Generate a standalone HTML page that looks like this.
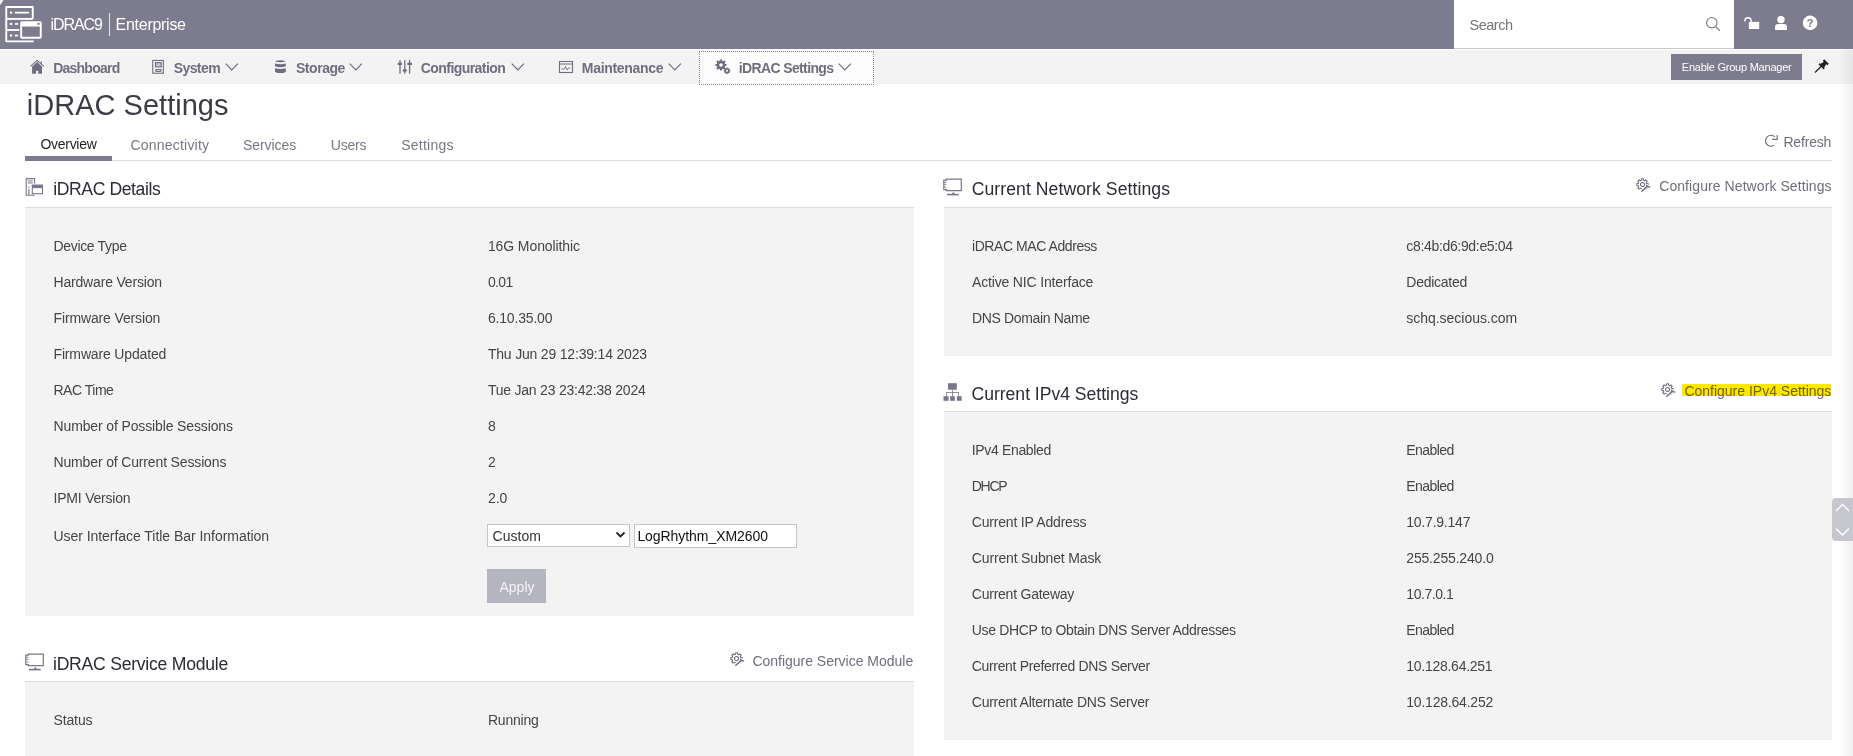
<!DOCTYPE html>
<html><head><meta charset="utf-8">
<style>
*{box-sizing:border-box;margin:0;padding:0}
html,body{width:1853px;height:756px;overflow:hidden;background:#fff;font-family:"Liberation Sans",sans-serif;position:relative}
.a{position:absolute;white-space:nowrap}
svg.a{overflow:visible}
</style></head><body>
<div class="a" style="left:0px;top:0px;width:1853px;height:49px;background:#7d7c8f;"></div>
<svg class="a" style="left:0px;top:0px;" width="6" height="6" viewBox="0 0 6 6"><path d="M0 0 H3.6 L0 5.2 Z" fill="#f4f4f8"/></svg>
<div class="a" style="left:0px;top:50px;width:1853px;height:34px;background:#f3f3f3;"></div>
<svg class="a" style="left:0px;top:0px;" width="50" height="48" viewBox="0 0 50 48"><g fill="none" stroke="#fff" stroke-width="1.9" stroke-linejoin="round">
<path d="M6.25 18.9 V6.95 H32.75 V18.9"/>
<path d="M6.25 18.9 H32.75"/>
<path d="M6.25 18.9 V41.35 H33.7"/>
<path d="M6.25 30 H19.2"/>
<rect x="21.15" y="22.15" width="19.6" height="15.6" rx="0.8"/>
</g>
<g fill="#fff"><rect x="9.9" y="11.6" width="2.3" height="2"/><rect x="14.9" y="11.8" width="14.2" height="1.7"/>
<rect x="9.9" y="22.9" width="2.3" height="2"/><rect x="14.9" y="23.1" width="3.2" height="1.7"/>
<rect x="9.9" y="34.5" width="2.3" height="2"/><rect x="14.9" y="34.7" width="3.2" height="1.7"/>
<rect x="21.15" y="22.15" width="19.6" height="4.4"/></g>
<rect x="37.4" y="22.8" width="2.2" height="2" fill="#7d7c8f"/></svg>
<div class="a" style="left:50.40px;top:15px;font-size:16px;line-height:20px;color:#fff;letter-spacing:-1.040px;">iDRAC9</div>
<div class="a" style="left:109px;top:13px;width:1px;height:23px;background:#e8e8ee;"></div>
<div class="a" style="left:115.60px;top:15px;font-size:16px;line-height:20px;color:#fff;letter-spacing:-0.278px;">Enterprise</div>
<div class="a" style="left:1454px;top:0px;width:280px;height:49px;background:#fff;border-bottom:1px solid #c9c9c9;"></div>
<div class="a" style="left:1469.60px;top:16px;font-size:14.5px;line-height:18px;color:#757575;letter-spacing:-0.510px;">Search</div>
<svg class="a" style="left:1704px;top:15px;" width="18" height="18" viewBox="0 0 18 18"><circle cx="7.8" cy="7.7" r="5.2" fill="none" stroke="#7a7a7a" stroke-width="1.1"/><path d="M11.6 11.6 L16 15.8" stroke="#7a7a7a" stroke-width="1.2"/></svg>
<svg class="a" style="left:1742px;top:14px;" width="20" height="18" viewBox="0 0 20 18"><path d="M2.9 7.4 V6.8 A3.1 3.1 0 0 1 9.1 6.8 V8" fill="none" stroke="#fff" stroke-width="1.35"/><rect x="6.85" y="7.9" width="10.35" height="7.1" fill="#fff"/></svg>
<svg class="a" style="left:1772px;top:13px;" width="18" height="19" viewBox="0 0 18 19"><circle cx="9" cy="6.6" r="3.65" fill="#fff"/><path d="M3 17 V14.2 Q3 10.9 6.3 10.9 H11.7 Q15 10.9 15 14.2 V17 Z" fill="#fff"/></svg>
<svg class="a" style="left:1801px;top:14px;" width="18" height="18" viewBox="0 0 18 18"><circle cx="9.1" cy="8.9" r="7.3" fill="#fff"/><text x="9.1" y="12.9" font-size="11.5" font-weight="bold" font-family="Liberation Sans" text-anchor="middle" fill="#7d7c8f">?</text></svg>
<svg class="a" style="left:26px;top:56px;" width="22" height="22" viewBox="0 0 22 22"><path d="M4.4 10.3 L11.1 4.4 L17.8 10.3" fill="none" stroke="#6f6e80" stroke-width="1.1"/><path d="M6.1 10.4 L11.1 6.1 L16 10.4 V17.75 H12.2 V14.8 H10 V17.75 H6.1 Z" fill="#6f6e80"/><rect x="14.7" y="5.1" width="1.1" height="2.8" fill="#6f6e80"/></svg>
<div class="a" style="left:53.20px;top:59px;font-size:14px;line-height:18px;color:#6f6e80;font-weight:bold;letter-spacing:-0.762px;">Dashboard</div>
<svg class="a" style="left:148px;top:56px;" width="22" height="22" viewBox="0 0 22 22"><rect x="4.75" y="4.45" width="10.6" height="12.8" fill="none" stroke="#6f6e80" stroke-width="1.1"/><rect x="7.5" y="6.6" width="5.7" height="4.3" fill="#c4c3cc" stroke="#6f6e80" stroke-width="1.1"/><rect x="7.5" y="13.6" width="5.7" height="1.9" rx="0.9" fill="none" stroke="#6f6e80" stroke-width="1.1"/></svg>
<div class="a" style="left:173.70px;top:59px;font-size:14px;line-height:18px;color:#6f6e80;font-weight:bold;letter-spacing:-0.580px;">System</div>
<svg class="a" style="left:224.8px;top:63px;" width="14" height="8" viewBox="0 0 14 8"><path d="M0.7 0.7 L6.8 6.8 L12.9 0.7" fill="none" stroke="#6f6e80" stroke-width="1.2"/></svg>
<svg class="a" style="left:270px;top:56px;" width="22" height="22" viewBox="0 0 22 22"><g fill="#6f6e80"><path d="M4.9 5.2 Q10.4 3.3 15.9 5.2 Q10.4 7.1 4.9 5.2 Z"/><path d="M5 7.6 Q10.4 9 15.8 7.6 V10.3 Q10.4 12.2 5 10.3 Z"/><path d="M5 12.3 Q10.4 13.7 15.8 12.3 V15.9 Q10.4 18.3 5 15.9 Z"/></g></svg>
<div class="a" style="left:296.00px;top:59px;font-size:14px;line-height:18px;color:#6f6e80;font-weight:bold;letter-spacing:-0.467px;">Storage</div>
<svg class="a" style="left:349.2px;top:63px;" width="14" height="8" viewBox="0 0 14 8"><path d="M0.7 0.7 L6.8 6.8 L12.9 0.7" fill="none" stroke="#6f6e80" stroke-width="1.2"/></svg>
<svg class="a" style="left:393px;top:56px;" width="24" height="22" viewBox="0 0 24 22"><g fill="#6f6e80"><rect x="6.35" y="4.1" width="1.3" height="13.6"/><rect x="11.15" y="4.1" width="1.3" height="13.6"/><rect x="15.95" y="4.1" width="1.3" height="13.6"/><rect x="4.8" y="6.7" width="4.2" height="2.3"/><rect x="9.9" y="13.3" width="3.8" height="2.3"/><rect x="14.3" y="6.7" width="4.6" height="2.3"/></g></svg>
<div class="a" style="left:420.80px;top:59px;font-size:14px;line-height:18px;color:#6f6e80;font-weight:bold;letter-spacing:-0.562px;">Configuration</div>
<svg class="a" style="left:510.6px;top:63px;" width="14" height="8" viewBox="0 0 14 8"><path d="M0.7 0.7 L6.8 6.8 L12.9 0.7" fill="none" stroke="#6f6e80" stroke-width="1.2"/></svg>
<svg class="a" style="left:558px;top:60px;" width="16" height="14" viewBox="0 0 16 14"><rect x="1.5" y="1.5" width="13" height="11" fill="none" stroke="#6f6e80" stroke-width="1.1"/><path d="M1.5 4 H14.5" stroke="#6f6e80" stroke-width="1"/><path d="M3.5 9 H6 L7.5 6.5 L9 10 L10.5 8 H12.5" fill="none" stroke="#6f6e80" stroke-width="0.9"/></svg>
<div class="a" style="left:581.80px;top:59px;font-size:14px;line-height:18px;color:#6f6e80;font-weight:bold;letter-spacing:-0.300px;">Maintenance</div>
<svg class="a" style="left:667.6px;top:63px;" width="14" height="8" viewBox="0 0 14 8"><path d="M0.7 0.7 L6.8 6.8 L12.9 0.7" fill="none" stroke="#6f6e80" stroke-width="1.2"/></svg>
<div class="a" style="left:699px;top:51px;width:175px;height:34px;background:#fdfdfd;border:1px dotted #8a8a8a;"></div>
<svg class="a" style="left:713px;top:57px;" width="20" height="20" viewBox="0 0 20 20"><g fill="#6f6e80"><circle cx="8" cy="8" r="4.3"/><g stroke="#6f6e80" stroke-width="2.2"><path d="M8 2.4V13.6M2.4 8H13.6M4 4L12 12M12 4L4 12"/></g><circle cx="14" cy="13.8" r="2.6"/><g stroke="#6f6e80" stroke-width="1.4"><path d="M14 10.6V17M10.8 13.8H17.2M11.7 11.5L16.3 16.1M16.3 11.5L11.7 16.1"/></g></g><circle cx="8" cy="8" r="1.8" fill="#fdfdfd"/><circle cx="14" cy="13.8" r="1" fill="#fdfdfd"/></svg>
<div class="a" style="left:738.70px;top:59px;font-size:14px;line-height:18px;color:#6f6e80;font-weight:bold;letter-spacing:-0.619px;">iDRAC Settings</div>
<svg class="a" style="left:838.2px;top:63px;" width="14" height="8" viewBox="0 0 14 8"><path d="M0.7 0.7 L6.8 6.8 L12.9 0.7" fill="none" stroke="#6f6e80" stroke-width="1.2"/></svg>
<div class="a" style="left:1671px;top:54px;width:131px;height:26px;background:#7d7c8f;"></div>
<div class="a" style="left:1681.80px;top:60px;font-size:11px;line-height:14px;color:#fff;letter-spacing:-0.234px;">Enable Group Manager</div>
<svg class="a" style="left:1813px;top:57px;" width="18" height="18" viewBox="0 0 18 18"><path d="M2 15.5 L9 8.5" stroke="#222" stroke-width="1.3"/><path d="M7 7 L11.5 4.5 L13.5 6.5 L11 11 Z" fill="#222"/><path d="M10.5 3 L15 7.5" stroke="#222" stroke-width="2.2"/><path d="M6 6.8 L11.2 12" stroke="#222" stroke-width="1.6"/></svg>
<div class="a" style="left:26.80px;top:87px;font-size:29px;line-height:36px;color:#3c3c46;letter-spacing:0.019px;">iDRAC Settings</div>
<div class="a" style="left:40.50px;top:135px;font-size:14px;line-height:18px;color:#1e1e24;letter-spacing:-0.300px;">Overview</div>
<div class="a" style="left:130.50px;top:136px;font-size:14px;line-height:18px;color:#787788;letter-spacing:0.205px;">Connectivity</div>
<div class="a" style="left:243.00px;top:136px;font-size:14px;line-height:18px;color:#787788;letter-spacing:-0.057px;">Services</div>
<div class="a" style="left:330.80px;top:136px;font-size:14px;line-height:18px;color:#787788;letter-spacing:-0.212px;">Users</div>
<div class="a" style="left:401.20px;top:136px;font-size:14px;line-height:18px;color:#787788;letter-spacing:0.243px;">Settings</div>
<div class="a" style="left:25px;top:160px;width:1807px;height:1px;background:#dcdce0;"></div>
<div class="a" style="left:25px;top:156px;width:87px;height:5px;background:#7d7c8f;"></div>
<svg class="a" style="left:1760px;top:130px;" width="24" height="22" viewBox="0 0 24 22"><path d="M14.94 6.87 A5.5 5.5 0 1 0 14.2 15.27" fill="none" stroke="#6f6e80" stroke-width="1.15"/><path d="M12.2 9.3 H17.2 V4.9" fill="none" stroke="#6f6e80" stroke-width="1.15"/></svg>
<div class="a" style="left:1783.40px;top:133px;font-size:14px;line-height:18px;color:#6f6e80;letter-spacing:-0.167px;">Refresh</div>
<svg class="a" style="left:25px;top:178px;" width="18" height="18" viewBox="0 0 18 18"><g fill="none" stroke="#77768a" stroke-width="1.1"><path d="M9.6 5.5 V0.6 H1.2 V17.3 H9.6"/></g><rect x="2.8" y="2.4" width="5" height="1" fill="#77768a"/><rect x="2.8" y="4.4" width="5" height="1" fill="#77768a"/><rect x="3.3" y="11" width="1.2" height="6" fill="#77768a"/><rect x="3.3" y="8.6" width="1.2" height="1.2" fill="#77768a"/><rect x="7.3" y="7.1" width="10.2" height="8.6" fill="none" stroke="#77768a" stroke-width="1.1"/><rect x="7.3" y="7.1" width="10.2" height="3" fill="#77768a"/></svg>
<div class="a" style="left:53.20px;top:178px;font-size:17.6px;line-height:22px;color:#2c2c36;letter-spacing:-0.404px;">iDRAC Details</div>
<div class="a" style="left:25px;top:207px;width:889px;height:409px;background:#f3f3f3;border-top:1px solid #dcdcdf;"></div>
<div class="a" style="left:53.50px;top:237px;font-size:14px;line-height:18px;color:#454545;letter-spacing:-0.330px;">Device Type</div>
<div class="a" style="left:487.90px;top:237px;font-size:14px;line-height:18px;color:#454545;letter-spacing:-0.092px;">16G Monolithic</div>
<div class="a" style="left:53.50px;top:273px;font-size:14px;line-height:18px;color:#454545;letter-spacing:-0.180px;">Hardware Version</div>
<div class="a" style="left:487.90px;top:273px;font-size:14px;line-height:18px;color:#454545;letter-spacing:-0.617px;">0.01</div>
<div class="a" style="left:53.50px;top:309px;font-size:14px;line-height:18px;color:#454545;letter-spacing:-0.140px;">Firmware Version</div>
<div class="a" style="left:487.90px;top:309px;font-size:14px;line-height:18px;color:#454545;letter-spacing:-0.172px;">6.10.35.00</div>
<div class="a" style="left:53.50px;top:345px;font-size:14px;line-height:18px;color:#454545;letter-spacing:-0.150px;">Firmware Updated</div>
<div class="a" style="left:487.90px;top:345px;font-size:14px;line-height:18px;color:#454545;letter-spacing:-0.189px;">Thu Jun 29 12:39:14 2023</div>
<div class="a" style="left:53.50px;top:381px;font-size:14px;line-height:18px;color:#454545;letter-spacing:-0.486px;">RAC Time</div>
<div class="a" style="left:487.90px;top:381px;font-size:14px;line-height:18px;color:#454545;letter-spacing:-0.220px;">Tue Jan 23 23:42:38 2024</div>
<div class="a" style="left:53.50px;top:417px;font-size:14px;line-height:18px;color:#454545;letter-spacing:-0.129px;">Number of Possible Sessions</div>
<div class="a" style="left:487.90px;top:417px;font-size:14px;line-height:18px;color:#454545;">8</div>
<div class="a" style="left:53.50px;top:453px;font-size:14px;line-height:18px;color:#454545;letter-spacing:-0.150px;">Number of Current Sessions</div>
<div class="a" style="left:487.90px;top:453px;font-size:14px;line-height:18px;color:#454545;">2</div>
<div class="a" style="left:53.50px;top:489px;font-size:14px;line-height:18px;color:#454545;letter-spacing:-0.205px;">IPMI Version</div>
<div class="a" style="left:487.90px;top:489px;font-size:14px;line-height:18px;color:#454545;">2.0</div>
<div class="a" style="left:53.40px;top:527px;font-size:14px;line-height:18px;color:#454545;letter-spacing:-0.040px;">User Interface Title Bar Information</div>
<div class="a" style="left:487px;top:524px;width:143px;height:23px;background:#fff;border:1px solid #c6c6c6;"></div>
<div class="a" style="left:492.60px;top:527px;font-size:14px;line-height:18px;color:#333;">Custom</div>
<svg class="a" style="left:615px;top:530px;" width="12" height="10" viewBox="0 0 12 10"><path d="M1.5 2.5 L5.5 6.5 L9.5 2.5" fill="none" stroke="#222" stroke-width="1.8"/></svg>
<div class="a" style="left:634px;top:524px;width:163px;height:24px;background:#fff;border:1px solid #c6c6c6;"></div>
<div class="a" style="left:637.40px;top:527px;font-size:14px;line-height:18px;color:#111;letter-spacing:-0.060px;">LogRhythm_XM2600</div>
<div class="a" style="left:487px;top:569px;width:59px;height:34px;background:#b5b4c1;"></div>
<div class="a" style="left:499.50px;top:578px;font-size:14px;line-height:18px;color:#f4f4f7;">Apply</div>
<svg class="a" style="left:21.8px;top:650.2px;" width="24" height="24" viewBox="0 0 24 24"><path d="M6.35 4.1 H21.3 V15.55 H6.35 V14.6 H3.8 V5.2 H6.35 Z" fill="none" stroke="#77768a" stroke-width="1.2"/><g stroke="#77768a" stroke-width="0.9"><path d="M4.2 7.3 H6.4"/><path d="M4.2 9.4 H6.4"/><path d="M4.2 12.1 H6.4"/></g><path d="M7 19.6 H18.7" stroke="#77768a" stroke-width="1.6"/><path d="M13.3 17.1 L11.3 19.6 H15.3 Z" fill="#77768a"/></svg>
<div class="a" style="left:53.00px;top:653px;font-size:17.6px;line-height:22px;color:#2c2c36;letter-spacing:-0.245px;">iDRAC Service Module</div>
<svg class="a" style="left:726px;top:648px;" width="24" height="22" viewBox="0 0 24 22"><path d="M9.39 6.30 L9.56 4.83 L11.44 4.83 L11.61 6.30 L12.68 6.74 L13.84 5.82 L15.18 7.16 L14.26 8.32 L14.70 9.39 L16.17 9.56 L16.17 11.44 L14.70 11.61 L14.26 12.68 L15.18 13.84 L13.84 15.18 L12.68 14.26 L11.61 14.70 L11.44 16.17 L9.56 16.17 L9.39 14.70 L8.32 14.26 L7.16 15.18 L5.82 13.84 L6.74 12.68 L6.30 11.61 L4.83 11.44 L4.83 9.56 L6.30 9.39 L6.74 8.32 L5.82 7.16 L7.16 5.82 L8.32 6.74 Z" fill="none" stroke="#6f6e80" stroke-width="1.05" stroke-linejoin="round"/><circle cx="10.5" cy="10.5" r="2.1" fill="none" stroke="#6f6e80" stroke-width="1.05"/><path d="M9.6 17.2 L15.2 12.2" stroke="#fff" stroke-width="3.4"/><path d="M14.2 11.4 L17.6 13.4" stroke="#fff" stroke-width="3"/><path d="M9.8 17.3 L15 12.6" stroke="#6f6e80" stroke-width="1.5" stroke-linecap="round"/><path d="M14.6 11.3 Q15.6 12.9 17.6 12.9" fill="none" stroke="#6f6e80" stroke-width="1.5" stroke-linecap="round"/></svg>
<div class="a" style="left:752.40px;top:652px;font-size:14px;line-height:18px;color:#6f6e80;letter-spacing:-0.013px;">Configure Service Module</div>
<div class="a" style="left:25px;top:681px;width:889px;height:80px;background:#f3f3f3;border-top:1px solid #dcdcdf;"></div>
<div class="a" style="left:53.40px;top:711px;font-size:14px;line-height:18px;color:#454545;letter-spacing:-0.100px;">Status</div>
<div class="a" style="left:487.90px;top:711px;font-size:14px;line-height:18px;color:#454545;letter-spacing:-0.192px;">Running</div>
<svg class="a" style="left:940px;top:175px;" width="24" height="24" viewBox="0 0 24 24"><path d="M6.35 4.1 H21.3 V15.55 H6.35 V14.6 H3.8 V5.2 H6.35 Z" fill="none" stroke="#77768a" stroke-width="1.2"/><g stroke="#77768a" stroke-width="0.9"><path d="M4.2 7.3 H6.4"/><path d="M4.2 9.4 H6.4"/><path d="M4.2 12.1 H6.4"/></g><path d="M7 19.6 H18.7" stroke="#77768a" stroke-width="1.6"/><path d="M13.3 17.1 L11.3 19.6 H15.3 Z" fill="#77768a"/></svg>
<div class="a" style="left:971.70px;top:178px;font-size:17.6px;line-height:22px;color:#2c2c36;letter-spacing:0.074px;">Current Network Settings</div>
<svg class="a" style="left:1632px;top:174px;" width="24" height="22" viewBox="0 0 24 22"><path d="M9.39 6.30 L9.56 4.83 L11.44 4.83 L11.61 6.30 L12.68 6.74 L13.84 5.82 L15.18 7.16 L14.26 8.32 L14.70 9.39 L16.17 9.56 L16.17 11.44 L14.70 11.61 L14.26 12.68 L15.18 13.84 L13.84 15.18 L12.68 14.26 L11.61 14.70 L11.44 16.17 L9.56 16.17 L9.39 14.70 L8.32 14.26 L7.16 15.18 L5.82 13.84 L6.74 12.68 L6.30 11.61 L4.83 11.44 L4.83 9.56 L6.30 9.39 L6.74 8.32 L5.82 7.16 L7.16 5.82 L8.32 6.74 Z" fill="none" stroke="#6f6e80" stroke-width="1.05" stroke-linejoin="round"/><circle cx="10.5" cy="10.5" r="2.1" fill="none" stroke="#6f6e80" stroke-width="1.05"/><path d="M9.6 17.2 L15.2 12.2" stroke="#fff" stroke-width="3.4"/><path d="M14.2 11.4 L17.6 13.4" stroke="#fff" stroke-width="3"/><path d="M9.8 17.3 L15 12.6" stroke="#6f6e80" stroke-width="1.5" stroke-linecap="round"/><path d="M14.6 11.3 Q15.6 12.9 17.6 12.9" fill="none" stroke="#6f6e80" stroke-width="1.5" stroke-linecap="round"/></svg>
<div class="a" style="left:1659.20px;top:177px;font-size:14px;line-height:18px;color:#6f6e80;letter-spacing:0.080px;">Configure Network Settings</div>
<div class="a" style="left:944px;top:207px;width:888px;height:149px;background:#f3f3f3;border-top:1px solid #dcdcdf;"></div>
<div class="a" style="left:972.00px;top:237px;font-size:14px;line-height:18px;color:#454545;letter-spacing:-0.434px;">iDRAC MAC Address</div>
<div class="a" style="left:1406.30px;top:237px;font-size:14px;line-height:18px;color:#454545;letter-spacing:-0.331px;">c8:4b:d6:9d:e5:04</div>
<div class="a" style="left:972.00px;top:273px;font-size:14px;line-height:18px;color:#454545;letter-spacing:-0.163px;">Active NIC Interface</div>
<div class="a" style="left:1406.30px;top:273px;font-size:14px;line-height:18px;color:#454545;letter-spacing:-0.269px;">Dedicated</div>
<div class="a" style="left:972.00px;top:309px;font-size:14px;line-height:18px;color:#454545;letter-spacing:-0.350px;">DNS Domain Name</div>
<div class="a" style="left:1406.30px;top:309px;font-size:14px;line-height:18px;color:#454545;letter-spacing:-0.030px;">schq.secious.com</div>
<svg class="a" style="left:940px;top:380px;" width="24" height="24" viewBox="0 0 24 24"><g fill="#77768a"><rect x="8.1" y="3.2" width="8.7" height="6.5"/><rect x="3.5" y="16.2" width="5.1" height="4.6"/><rect x="10.2" y="16.2" width="4.6" height="4.6"/><rect x="16.8" y="16.2" width="4.8" height="4.6"/><rect x="12.2" y="9.7" width="0.8" height="6.5"/><rect x="6" y="12.1" width="13" height="0.8"/><rect x="6" y="12.1" width="0.8" height="4.1"/><rect x="18.2" y="12.1" width="0.8" height="4.1"/></g></svg>
<div class="a" style="left:971.50px;top:383px;font-size:17.6px;line-height:22px;color:#2c2c36;letter-spacing:-0.025px;">Current IPv4 Settings</div>
<svg class="a" style="left:1657px;top:379px;" width="24" height="22" viewBox="0 0 24 22"><path d="M9.39 6.30 L9.56 4.83 L11.44 4.83 L11.61 6.30 L12.68 6.74 L13.84 5.82 L15.18 7.16 L14.26 8.32 L14.70 9.39 L16.17 9.56 L16.17 11.44 L14.70 11.61 L14.26 12.68 L15.18 13.84 L13.84 15.18 L12.68 14.26 L11.61 14.70 L11.44 16.17 L9.56 16.17 L9.39 14.70 L8.32 14.26 L7.16 15.18 L5.82 13.84 L6.74 12.68 L6.30 11.61 L4.83 11.44 L4.83 9.56 L6.30 9.39 L6.74 8.32 L5.82 7.16 L7.16 5.82 L8.32 6.74 Z" fill="none" stroke="#6f6e80" stroke-width="1.05" stroke-linejoin="round"/><circle cx="10.5" cy="10.5" r="2.1" fill="none" stroke="#6f6e80" stroke-width="1.05"/><path d="M9.6 17.2 L15.2 12.2" stroke="#fff" stroke-width="3.4"/><path d="M14.2 11.4 L17.6 13.4" stroke="#fff" stroke-width="3"/><path d="M9.8 17.3 L15 12.6" stroke="#6f6e80" stroke-width="1.5" stroke-linecap="round"/><path d="M14.6 11.3 Q15.6 12.9 17.6 12.9" fill="none" stroke="#6f6e80" stroke-width="1.5" stroke-linecap="round"/></svg>
<div class="a" style="left:1684.40px;top:382px;font-size:14px;line-height:18px;color:#6f6e80;letter-spacing:-0.005px;">Configure IPv4 Settings</div>
<div class="a" style="left:1682px;top:384px;width:149px;height:12px;background:#ffe800;mix-blend-mode:multiply;"></div>
<div class="a" style="left:944px;top:411px;width:888px;height:329px;background:#f3f3f3;border-top:1px solid #dcdcdf;"></div>
<div class="a" style="left:971.80px;top:441px;font-size:14px;line-height:18px;color:#454545;letter-spacing:-0.345px;">IPv4 Enabled</div>
<div class="a" style="left:1406.30px;top:441px;font-size:14px;line-height:18px;color:#454545;letter-spacing:-0.550px;">Enabled</div>
<div class="a" style="left:971.80px;top:477px;font-size:14px;line-height:18px;color:#454545;letter-spacing:-1.283px;">DHCP</div>
<div class="a" style="left:1406.30px;top:477px;font-size:14px;line-height:18px;color:#454545;letter-spacing:-0.550px;">Enabled</div>
<div class="a" style="left:971.80px;top:513px;font-size:14px;line-height:18px;color:#454545;letter-spacing:-0.194px;">Current IP Address</div>
<div class="a" style="left:1406.30px;top:513px;font-size:14px;line-height:18px;color:#454545;letter-spacing:-0.228px;">10.7.9.147</div>
<div class="a" style="left:971.80px;top:549px;font-size:14px;line-height:18px;color:#454545;letter-spacing:-0.158px;">Current Subnet Mask</div>
<div class="a" style="left:1406.30px;top:549px;font-size:14px;line-height:18px;color:#454545;letter-spacing:-0.179px;">255.255.240.0</div>
<div class="a" style="left:971.80px;top:585px;font-size:14px;line-height:18px;color:#454545;letter-spacing:-0.236px;">Current Gateway</div>
<div class="a" style="left:1406.30px;top:585px;font-size:14px;line-height:18px;color:#454545;letter-spacing:-0.457px;">10.7.0.1</div>
<div class="a" style="left:971.80px;top:621px;font-size:14px;line-height:18px;color:#454545;letter-spacing:-0.328px;">Use DHCP to Obtain DNS Server Addresses</div>
<div class="a" style="left:1406.30px;top:621px;font-size:14px;line-height:18px;color:#454545;letter-spacing:-0.550px;">Enabled</div>
<div class="a" style="left:971.80px;top:657px;font-size:14px;line-height:18px;color:#454545;letter-spacing:-0.337px;">Current Preferred DNS Server</div>
<div class="a" style="left:1406.30px;top:657px;font-size:14px;line-height:18px;color:#454545;letter-spacing:-0.271px;">10.128.64.251</div>
<div class="a" style="left:971.80px;top:693px;font-size:14px;line-height:18px;color:#454545;letter-spacing:-0.252px;">Current Alternate DNS Server</div>
<div class="a" style="left:1406.30px;top:693px;font-size:14px;line-height:18px;color:#454545;letter-spacing:-0.212px;">10.128.64.252</div>
<div class="a" style="left:1838px;top:49px;width:15px;height:707px;background:linear-gradient(90deg,rgba(0,0,0,0),rgba(0,0,0,0.06));"></div>
<div class="a" style="left:1832px;top:498px;width:21px;height:43px;background:#c6c6ce;border-radius:4px 0 0 4px;"></div>
<svg class="a" style="left:1832px;top:498px;" width="21" height="43" viewBox="0 0 21 43"><path d="M4 13 L10.5 6.5 L17 13" fill="none" stroke="#fff" stroke-width="1.4"/><path d="M4 30.6 L10.5 37.1 L17 30.6" fill="none" stroke="#fff" stroke-width="1.4"/></svg>
</body></html>
